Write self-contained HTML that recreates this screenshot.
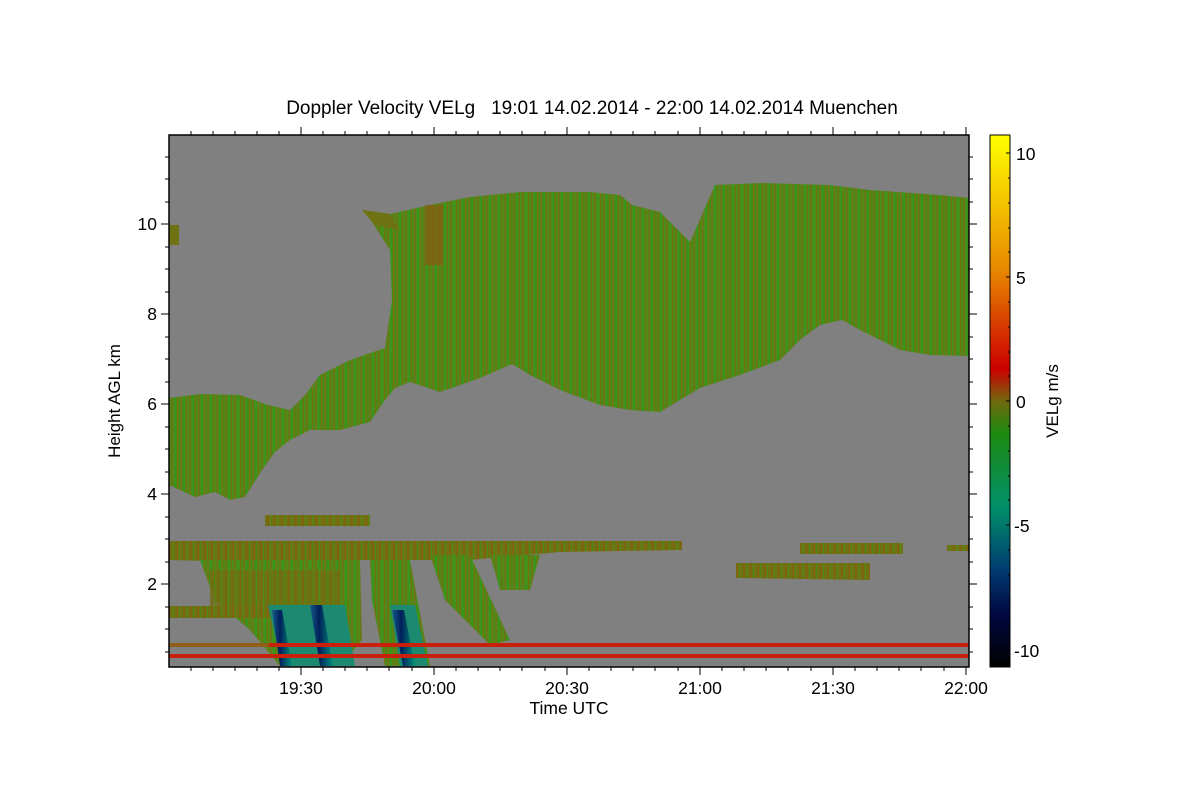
<!DOCTYPE html>
<html><head><style>
body{margin:0;background:#fff;}
svg{display:block;font-family:"Liberation Sans",sans-serif;}
</style></head><body>
<svg width="1200" height="800" viewBox="0 0 1200 800" xmlns="http://www.w3.org/2000/svg">
<defs>
<pattern id="st" width="9" height="40" patternUnits="userSpaceOnUse">
<rect width="9" height="40" fill="#4f8a16"/>
<rect x="0" width="2" height="40" fill="#66781a"/>
<rect x="3" width="2" height="40" fill="#3a951e"/>
<rect x="6" width="1" height="40" fill="#727010"/>
</pattern>
<pattern id="br" width="7" height="30" patternUnits="userSpaceOnUse">
<rect width="7" height="30" fill="#6f7210"/>
<rect x="1" width="2" height="30" fill="#7d6412"/>
<rect x="4" width="1" height="30" fill="#4f8a18"/>
</pattern>
<linearGradient id="cb" x1="0" y1="0" x2="0" y2="1">
<stop offset="0" stop-color="#ffff00"/>
<stop offset="0.25" stop-color="#e88a00"/>
<stop offset="0.44" stop-color="#cc0000"/>
<stop offset="0.5" stop-color="#70680e"/>
<stop offset="0.56" stop-color="#1e8a10"/>
<stop offset="0.7" stop-color="#00906a"/>
<stop offset="0.82" stop-color="#003a70"/>
<stop offset="0.9" stop-color="#000840"/>
<stop offset="1" stop-color="#000000"/>
</linearGradient>
<linearGradient id="bl" x1="0" y1="0" x2="1" y2="0">
<stop offset="0" stop-color="#1a5a8a"/>
<stop offset="0.4" stop-color="#00205a"/>
<stop offset="1" stop-color="#00907a"/>
</linearGradient>
</defs>
<text x="592" y="114" font-size="19" text-anchor="middle" style="white-space:pre" xml:space="preserve">Doppler Velocity VELg   19:01 14.02.2014 - 22:00 14.02.2014 Muenchen</text>
<rect x="169" y="135" width="800" height="532" fill="#808080"/>
<path fill="url(#st)" d="M362,210 L390,214 L430,205 L470,197 L520,192 L590,192 L620,195 L632,205 L660,212 L690,242 L715,185 L760,183 L830,185 L870,190 L940,195 L969,198 L969,356 L930,355 L900,350 L860,330 L842,320 L820,325 L800,340 L780,360 L740,375 L700,388 L660,412 L630,410 L600,405 L560,390 L530,375 L512,364 L480,378 L440,392 L410,382 L395,388 L385,400 L370,422 L340,430 L310,430 L290,440 L275,452 L262,470 L245,497 L230,500 L215,492 L195,497 L169,485 L169,398 L200,394 L240,395 L268,405 L290,410 L305,395 L320,375 L350,360 L385,348 L392,300 L390,250 L372,222 Z"/>
<rect x="425" y="205" width="18" height="60" fill="#8a5a14" opacity="0.7"/>
<path fill="#6e7212" d="M362,210 L390,214 L400,230 L375,225 Z"/>
<rect x="169" y="225" width="10" height="20" fill="#6e7212"/>
<rect x="265" y="515" width="105" height="11" fill="url(#br)"/>
<path fill="url(#br)" d="M169,541 L682,541 L682,550 L560,552 L470,560 L360,560 L250,562 L169,560 Z"/>
<path fill="url(#st)" d="M200,560 L360,560 L362,640 L340,666 L280,666 L250,630 L215,600 Z"/>
<rect x="210" y="570" width="130" height="45" fill="url(#br)" opacity="0.8"/>
<rect x="169" y="606" width="100" height="12" fill="url(#br)"/>
<path fill="url(#st)" d="M370,560 L410,560 L430,666 L385,666 L372,600 Z"/>
<path fill="url(#st)" d="M430,555 L470,555 L510,640 L490,645 L445,600 Z"/>
<path fill="url(#st)" d="M490,555 L540,555 L530,590 L500,590 Z"/>
<path fill="#1c8a70" d="M268,605 L345,605 L355,666 L282,666 Z"/>
<path fill="url(#bl)" d="M272,610 L282,610 L292,666 L280,666 Z"/>
<path fill="url(#bl)" d="M310,605 L322,605 L333,666 L320,666 Z"/>
<path fill="#1c8a70" d="M390,605 L415,605 L428,666 L400,666 Z"/>
<path fill="url(#bl)" d="M392,610 L404,610 L415,666 L403,666 Z"/>
<path fill="url(#br)" d="M736,563 L870,563 L870,580 L736,578 Z"/>
<rect x="800" y="543" width="103" height="11" fill="url(#br)"/>
<rect x="947" y="545" width="22" height="6" fill="url(#br)"/>
<rect x="169" y="643" width="800" height="4" fill="#c8200a"/>
<rect x="169" y="654" width="800" height="4" fill="#c8200a"/>
<rect x="169" y="643" width="100" height="4" fill="#6a8a20" opacity="0.6"/>
<rect x="169" y="135" width="800" height="532" fill="none" stroke="#000" stroke-width="1.5"/>
<g stroke="#000" stroke-width="1">
<path d="M301,667v8M434,667v8M567,667v8M700,667v8M833,667v8M966,667v8M301,135v-8M434,135v-8M567,135v-8M700,135v-8M833,135v-8M966,135v-8"/>
<path d="M169,224h-8M169,314h-8M169,404h-8M169,494h-8M169,584h-8M969,224h8M969,314h8M969,404h8M969,494h8M969,584h8"/>
<path d="M191,667v4M213,667v4M235,667v4M257,667v4M279,667v4M323,667v4M345,667v4M367,667v4M389,667v4M412,667v4M456,667v4M478,667v4M500,667v4M522,667v4M545,667v4M589,667v4M611,667v4M633,667v4M655,667v4M678,667v4M722,667v4M744,667v4M766,667v4M788,667v4M811,667v4M855,667v4M877,667v4M899,667v4M921,667v4M944,667v4"/>
<path d="M191,135v-4M213,135v-4M235,135v-4M257,135v-4M279,135v-4M323,135v-4M345,135v-4M367,135v-4M389,135v-4M412,135v-4M456,135v-4M478,135v-4M500,135v-4M522,135v-4M545,135v-4M589,135v-4M611,135v-4M633,135v-4M655,135v-4M678,135v-4M722,135v-4M744,135v-4M766,135v-4M788,135v-4M811,135v-4M855,135v-4M877,135v-4M899,135v-4M921,135v-4M944,135v-4"/>
<path d="M169,157h-4M169,179h-4M169,202h-4M169,247h-4M169,269h-4M169,292h-4M169,337h-4M169,359h-4M169,382h-4M169,427h-4M169,449h-4M169,472h-4M169,517h-4M169,539h-4M169,562h-4M169,607h-4M169,629h-4M169,652h-4"/>
<path d="M969,157h4M969,179h4M969,202h4M969,247h4M969,269h4M969,292h4M969,337h4M969,359h4M969,382h4M969,427h4M969,449h4M969,472h4M969,517h4M969,539h4M969,562h4M969,607h4M969,629h4M969,652h4"/>
</g>
<g font-size="17.5" text-anchor="end">
<text x="157" y="230">10</text><text x="157" y="320">8</text><text x="157" y="410">6</text><text x="157" y="500">4</text><text x="157" y="590">2</text>
</g>
<g font-size="17.5" text-anchor="middle">
<text x="301" y="694">19:30</text><text x="434" y="694">20:00</text><text x="567" y="694">20:30</text><text x="700" y="694">21:00</text><text x="833" y="694">21:30</text><text x="966" y="694">22:00</text>
<text x="569" y="714">Time UTC</text>
</g>
<text transform="translate(120,401) rotate(-90)" font-size="17" text-anchor="middle">Height AGL km</text>
<rect x="990" y="135" width="20" height="532" fill="url(#cb)" stroke="#000" stroke-width="1"/>
<g stroke="#000"><path d="M1010,153h-4M1010,277h-4M1010,401h-4M1010,525h-4M1010,650h-4M1010,178h-2M1010,203h-2M1010,228h-2M1010,252h-2M1010,302h-2M1010,327h-2M1010,352h-2M1010,376h-2M1010,426h-2M1010,451h-2M1010,476h-2M1010,500h-2M1010,550h-2M1010,575h-2M1010,600h-2M1010,625h-2"/></g>
<g font-size="17.5">
<text x="1016" y="160">10</text><text x="1016" y="284">5</text><text x="1016" y="408">0</text><text x="1014" y="532">-5</text><text x="1014" y="657">-10</text>
</g>
<text transform="translate(1058,401) rotate(-90)" font-size="17" text-anchor="middle">VELg m/s</text>
</svg>
</body></html>
